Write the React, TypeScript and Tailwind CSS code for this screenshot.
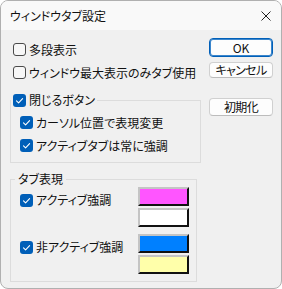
import type { ReactNode } from "react";

function Check({ checked }: { checked?: boolean }) {
  if (checked) {
    return (
      <span className="flex h-[13px] w-[13px] shrink-0 items-center justify-center rounded-[3px] bg-[#005fb8]">
        <svg width="13" height="13" viewBox="0 0 13 13" fill="none">
          <path d="M3.5 6.8 5.6 8.8 9.6 4.6" stroke="#fff" strokeWidth="1.1" strokeLinecap="round" strokeLinejoin="round" />
        </svg>
      </span>
    );
  }
  return <span className="h-[13px] w-[13px] shrink-0 rounded-[3px] border border-[#4a4a4a] bg-[#f7f7f7]" />;
}

function Row({ checked, children }: { checked?: boolean; children: ReactNode }) {
  return (
    <div className="flex h-[23px] items-center gap-[3px]">
      <Check checked={checked} />
      <span>{children}</span>
    </div>
  );
}

function Swatch({ color }: { color: string }) {
  return (
    <div
      className="h-[19px] w-[51px] border-2 border-t-[#c4c4c4] border-l-[#c4c4c4] border-r-[#111] border-b-[#111]"
      style={{ backgroundColor: color }}
    />
  );
}

function Btn({ children, primary, h }: { children: ReactNode; primary?: boolean; h: string }) {
  return (
    <div
      className={
        primary
          ? `flex w-[64px] items-center justify-center rounded-[4px] border border-[#005fb8] bg-[#fdfdfd] shadow-[inset_0_0_0_1px_#3b86cc] ${h}`
          : `flex w-[64px] items-center justify-center rounded-[4px] border border-[#d0d0d0] border-b-[#bcbcbc] bg-[#fdfdfd] tracking-[-0.6px] ${h}`
      }
    >
      {children}
    </div>
  );
}

export default function App() {
  return (
    <div className="h-[289px] w-[282px] overflow-hidden rounded-[8px] border border-[#b0b0b0] bg-[#f0f0f0] font-['Noto_Sans_CJK_JP','Noto_Sans',sans-serif] text-[12px] leading-[16px] text-[#111] [font-feature-settings:'palt']">
      <div className="flex h-[29px] items-center justify-between bg-[#f9f9f9] pl-[9px] pr-[10px]">
        <span>ウィンドウタブ設定</span>
        <svg width="10" height="10" viewBox="0 0 10 10" fill="none">
          <path d="M0.5 0.5 9.5 9.5M9.5 0.5 0.5 9.5" stroke="#222" strokeWidth="1" />
        </svg>
      </div>

      <div className="flex pl-[9px] pt-[8px]">
        <div className="w-[191px]">
          <div className="pl-[3px]">
            <Row>多段表示</Row>
            <Row>ウィンドウ最大表示のみタブ使用</Row>
          </div>

          <fieldset className="mt-[8px] w-[191px] border border-[#dcdcdc]">
            <legend className="flex h-[16px] items-center gap-[3px] px-[2px]">
              <Check checked />
              <span>閉じるボタン</span>
            </legend>
            <div className="pb-[5px] pl-[9px] pt-[3px]">
              <Row checked>カーソル位置で表現変更</Row>
              <Row checked>アクティブタブは常に強調</Row>
            </div>
          </fieldset>

          <fieldset className="mt-[8px] w-[187px] border border-[#dcdcdc]">
            <legend className="ml-[4px] flex h-[16px] items-center px-[3px]">タブ表現</legend>
            <div className="flex flex-col gap-[7px] pb-[7px] pl-[9px]">
              <div className="flex">
                <div className="flex h-[26px] w-[118px] items-center gap-[3px]">
                  <Check checked />
                  <span>アクティブ強調</span>
                </div>
                <div className="flex flex-col gap-[2px]">
                  <Swatch color="#ff55ff" />
                  <Swatch color="#ffffff" />
                </div>
              </div>
              <div className="flex">
                <div className="flex h-[26px] w-[118px] items-center gap-[3px]">
                  <Check checked />
                  <span>非アクティブ強調</span>
                </div>
                <div className="flex flex-col gap-[2px]">
                  <Swatch color="#0080ff" />
                  <Swatch color="#ffffaa" />
                </div>
              </div>
            </div>
          </fieldset>
        </div>

        <div className="ml-[8px] flex flex-col">
          <Btn primary h="h-[19px]">OK</Btn>
          <div className="mt-[5px]">
            <Btn h="h-[16px]">キャンセル</Btn>
          </div>
          <div className="mt-[20px]">
            <Btn h="h-[18px]">初期化</Btn>
          </div>
        </div>
      </div>
    </div>
  );
}
